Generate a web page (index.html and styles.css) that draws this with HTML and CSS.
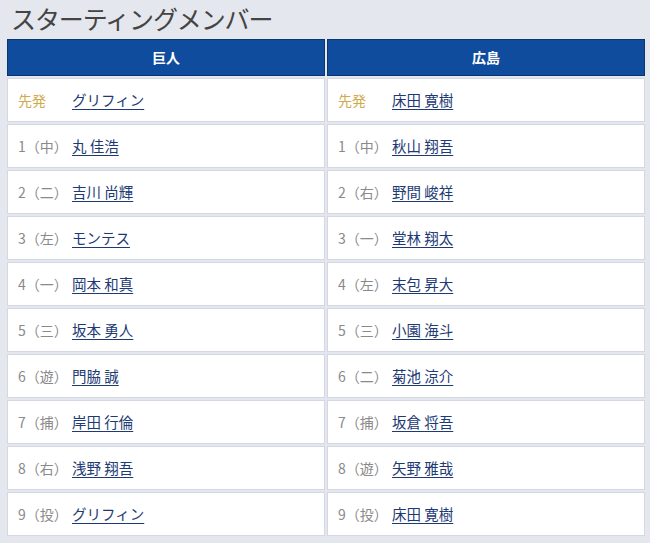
FILE: index.html
```html
<!DOCTYPE html>
<html lang="ja">
<head>
<meta charset="utf-8">
<link rel="stylesheet" href="styles.css">
</head>
<body>
<h1 class="title">スターティングメンバー</h1>
<table class="lineup">
  <thead>
    <tr><th>巨人</th><th>広島</th></tr>
  </thead>
  <tbody>
    <tr>
      <td><span class="pos starter">先発</span><a href="#">グリフィン</a></td>
      <td><span class="pos starter">先発</span><a href="#">床田 寛樹</a></td>
    </tr>
    <tr>
      <td><span class="pos">1（中）</span><a href="#">丸 佳浩</a></td>
      <td><span class="pos">1（中）</span><a href="#">秋山 翔吾</a></td>
    </tr>
    <tr>
      <td><span class="pos">2（二）</span><a href="#">吉川 尚輝</a></td>
      <td><span class="pos">2（右）</span><a href="#">野間 峻祥</a></td>
    </tr>
    <tr>
      <td><span class="pos">3（左）</span><a href="#">モンテス</a></td>
      <td><span class="pos">3（一）</span><a href="#">堂林 翔太</a></td>
    </tr>
    <tr>
      <td><span class="pos">4（一）</span><a href="#">岡本 和真</a></td>
      <td><span class="pos">4（左）</span><a href="#">末包 昇大</a></td>
    </tr>
    <tr>
      <td><span class="pos">5（三）</span><a href="#">坂本 勇人</a></td>
      <td><span class="pos">5（三）</span><a href="#">小園 海斗</a></td>
    </tr>
    <tr>
      <td><span class="pos">6（遊）</span><a href="#">門脇 誠</a></td>
      <td><span class="pos">6（二）</span><a href="#">菊池 涼介</a></td>
    </tr>
    <tr>
      <td><span class="pos">7（捕）</span><a href="#">岸田 行倫</a></td>
      <td><span class="pos">7（捕）</span><a href="#">坂倉 将吾</a></td>
    </tr>
    <tr>
      <td><span class="pos">8（右）</span><a href="#">浅野 翔吾</a></td>
      <td><span class="pos">8（遊）</span><a href="#">矢野 雅哉</a></td>
    </tr>
    <tr>
      <td><span class="pos">9（投）</span><a href="#">グリフィン</a></td>
      <td><span class="pos">9（投）</span><a href="#">床田 寛樹</a></td>
    </tr>
  </tbody>
</table>
</body>
</html>
```
FILE: styles.css
```css
html, body {
  margin: 0;
  padding: 0;
  background: #e4e7ee;
}
body {
  font-family: "Noto Sans CJK JP", "Noto Sans", sans-serif;
  color: #333;
}
.title {
  margin: 0;
  padding: 0 0 0 11px;
  height: 37px;
  line-height: 36px;
  font-size: 25px;
  font-weight: normal;
  color: #444;
  letter-spacing: -1.1px;
}
.lineup {
  margin-left: 5px;
  border-collapse: separate;
  border-spacing: 2px;
  width: 642px;
  table-layout: fixed;
}
.lineup th {
  height: 34px;
  padding: 0 0 1px;
  background: #0f4c9d;
  border: 1px solid #0a356f;
  color: #fff;
  font-size: 14px;
  font-weight: bold;
  text-align: center;
}
.lineup td {
  height: 40px;
  padding: 0 0 2px 10px;
  background: #fff;
  border: 1px solid #d3d8e2;
  font-size: 14.5px;
  white-space: nowrap;
}
.pos {
  display: inline-block;
  width: 54px;
  color: #8a8a8a;
  font-size: 14px;
}
.pos.starter {
  color: #d2a84e;
}
.lineup a {
  color: #1d3a74;
  text-decoration: underline;
  text-underline-offset: 3px;
}
```
